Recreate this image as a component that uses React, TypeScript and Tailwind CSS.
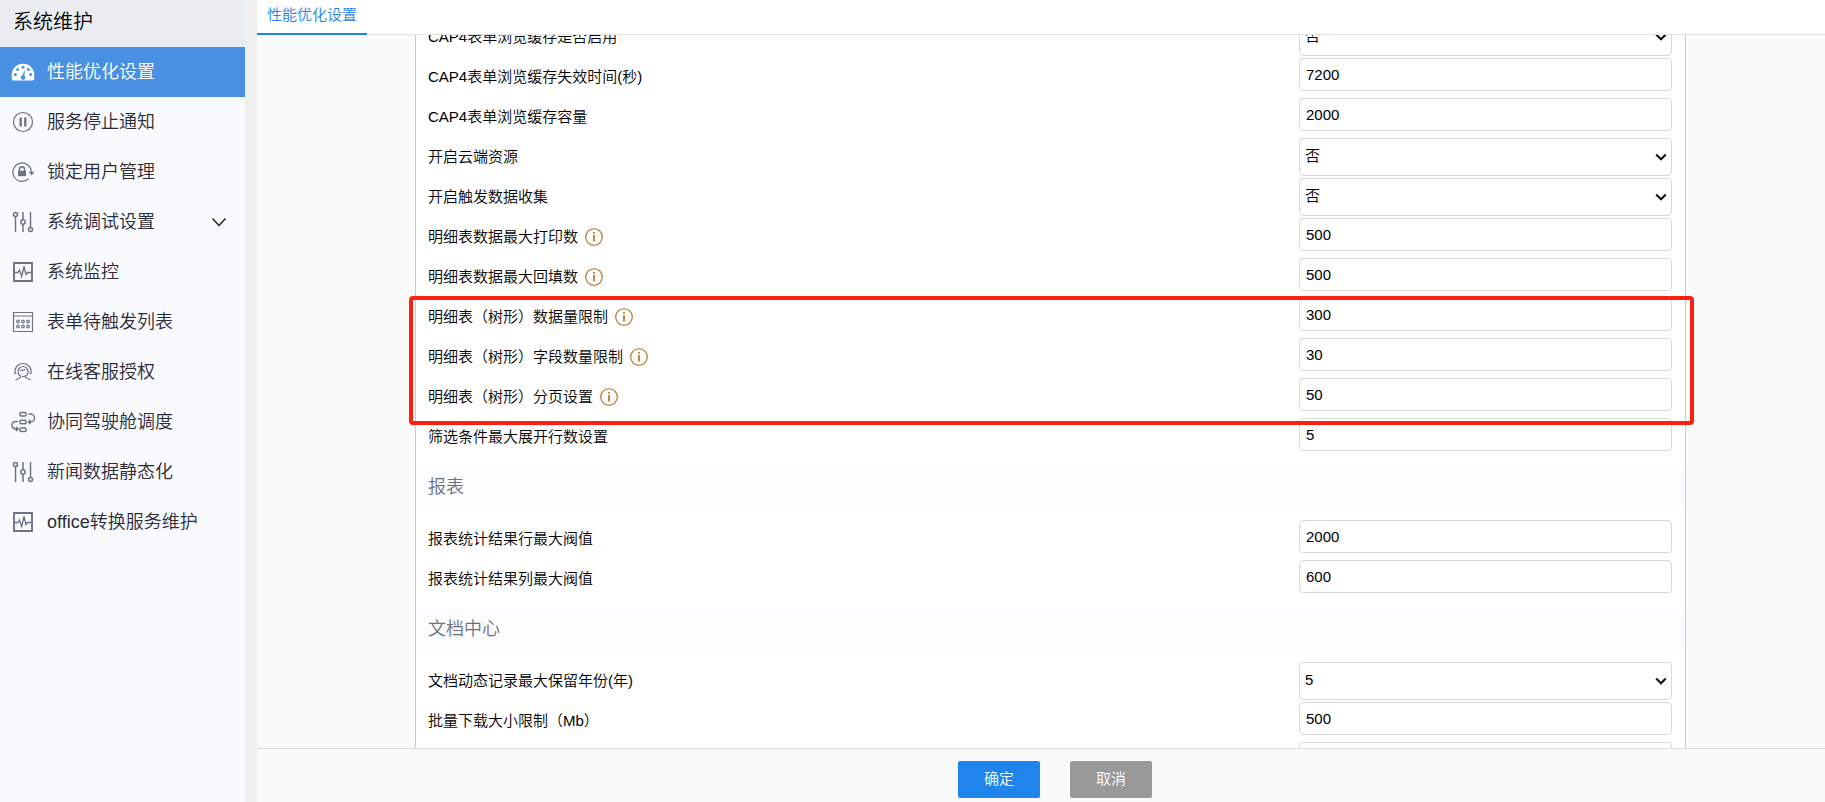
import React, { useState } from 'react';
import clsx from 'clsx';

interface MenuItem {
  name: string;
  icon: React.ReactNode;
  expandable?: boolean;
}

interface Field {
  id: string;
  label?: string;
  value: string;
  type?: 'select';
  info?: boolean;
}

const svgProps = {
  width: 24,
  height: 24,
  viewBox: '0 0 24 24',
  fill: 'none',
  stroke: 'currentColor',
  strokeWidth: 1.2,
  'aria-hidden': true,
};

const GaugeIcon = () => (
  <svg {...svgProps} stroke="none">
    <path d="M2.5 20.5A2 2 0 0 1 .7 18.500V15a11.300 11.300 0 0 1 22.600 0v3.500a2 2 0 0 1-1.800 2z" fill="#fff" />
    <g fill="#4a90e2">
      <circle cx="4.400" cy="14.500" r="1.500" />
      <circle cx="6.600" cy="9.500" r="1.500" />
      <circle cx="12" cy="7.200" r="1.500" />
      <circle cx="17.400" cy="9.500" r="1.500" />
      <circle cx="19.600" cy="14.500" r="1.500" />
      <path d="M14 9.500l-.6 6.200a2.300 2.300 0 1 1-2-.4z" />
    </g>
  </svg>
);

const PauseIcon = () => (
  <svg {...svgProps}>
    <circle cx="12" cy="12" r="9.500" />
    <path d="M9.700 7.500v9M14.300 7.500v9" strokeWidth="2.300" />
  </svg>
);

const LockIcon = () => (
  <svg {...svgProps}>
    <path d="M17.500 18.800A9.200 9.200 0 1 1 20.300 12" />
    <path d="M17.800 11.800h5.500l-2.600 3.700z" fill="currentColor" stroke="none" />
    <path d="M7 10.800h8v5.400H7z" fill="currentColor" stroke="none" />
    <path d="M8.500 11V9.300a2.500 2.500 0 0 1 5 0V11" strokeWidth="1.500" />
  </svg>
);

const SlidersIcon = () => (
  <svg {...svgProps} strokeWidth="1.500">
    <circle cx="4.500" cy="4.500" r="2" />
    <path d="M4.500 6.500V22M12 2v7.800M12 14.200V22M19.500 2v15.500" />
    <circle cx="12" cy="12" r="2.200" />
    <circle cx="19.500" cy="19.500" r="2" />
  </svg>
);

const MonitorIcon = () => (
  <svg {...svgProps}>
    <path d="M3 3h18v18H3z" strokeWidth="1.900" />
    <path d="M4 12.500h3l1.500-2.500 2.200 6.500 2.300-10 2 8 1.500-2H20" strokeWidth="1.300" />
  </svg>
);

const CalendarIcon = () => (
  <svg {...svgProps}>
    <path d="M2.500 2.500h19v19h-19zM2.500 6h19" />
    {[7, 12, 17].map((x) => (
      <React.Fragment key={x}>
        <circle cx={x} cy="11.500" r="1.300" />
        <circle cx={x} cy="16.500" r="1.300" />
      </React.Fragment>
    ))}
  </svg>
);

const ServiceIcon = () => (
  <svg {...svgProps}>
    <path d="M5.500 13.500H4V11a8 7.500 0 0 1 16 0v2.500h-1.500" />
    <path d="M7 11.500a5 5 0 0 1 10 0c0 2.500-1.500 4.500-4 5h-2" />
    <path d="M7.500 11.500c-.5 2 .5 3.700 2 4.500v1.500L4.500 20M9 10c2 .8 4 .4 5-1M14.500 16.500v1l5 2.500" />
  </svg>
);

const FlowIcon = () => (
  <svg {...svgProps} strokeWidth="1.500">
    <rect x="9" y="2.500" width="6" height="3.500" rx="1" />
    <rect x="9" y="10.200" width="6" height="3.500" rx="1" />
    <rect x="9" y="18" width="6" height="3.500" rx="1" />
    <path d="M17.500 4h2a3.500 3.500 0 0 1 0 8h-2M19.500 10l-2 2 2 2" />
    <path d="M7 11.500H4.700a3.700 3.700 0 0 0 0 7.500H7M5 17l2 2-2 2" />
  </svg>
);

const InfoIcon = () => (
  <svg width="18" height="18" viewBox="0 0 18 18" fill="none" stroke="#b86a14" aria-hidden="true">
    <circle cx="9" cy="9" r="8.300" strokeWidth="1.100" />
    <path d="M9 7v6.500" strokeWidth="1.600" />
    <path d="M9 4v1.800" strokeWidth="1.600" />
  </svg>
);

const menuItems: MenuItem[] = [
  { name: '性能优化设置', icon: <GaugeIcon /> },
  { name: '服务停止通知', icon: <PauseIcon /> },
  { name: '锁定用户管理', icon: <LockIcon /> },
  { name: '系统调试设置', icon: <SlidersIcon />, expandable: true },
  { name: '系统监控', icon: <MonitorIcon /> },
  { name: '表单待触发列表', icon: <CalendarIcon /> },
  { name: '在线客服授权', icon: <ServiceIcon /> },
  { name: '协同驾驶舱调度', icon: <FlowIcon /> },
  { name: '新闻数据静态化', icon: <SlidersIcon /> },
  { name: 'office转换服务维护', icon: <MonitorIcon /> },
];

const formFields: Field[] = [
  { id: 'cacheEnabled', label: 'CAP4表单浏览缓存是否启用', value: '否', type: 'select' },
  { id: 'cacheTimeout', label: 'CAP4表单浏览缓存失效时间(秒)', value: '7200' },
  { id: 'cacheSize', label: 'CAP4表单浏览缓存容量', value: '2000' },
  { id: 'cloud', label: '开启云端资源', value: '否', type: 'select' },
  { id: 'trigger', label: '开启触发数据收集', value: '否', type: 'select' },
  { id: 'maxPrint', label: '明细表数据最大打印数', value: '500', info: true },
  { id: 'maxFill', label: '明细表数据最大回填数', value: '500', info: true },
];

const treeFields: Field[] = [
  { id: 'treeRows', label: '明细表（树形）数据量限制', value: '300', info: true },
  { id: 'treeColumns', label: '明细表（树形）字段数量限制', value: '30', info: true },
  { id: 'treePage', label: '明细表（树形）分页设置', value: '50', info: true },
];

const filterFields: Field[] = [
  { id: 'filterRows', label: '筛选条件最大展开行数设置', value: '5' },
];

const reportFields: Field[] = [
  { id: 'reportRows', label: '报表统计结果行最大阀值', value: '2000' },
  { id: 'reportColumns', label: '报表统计结果列最大阀值', value: '600' },
];

const docFields: Field[] = [
  { id: 'docYears', label: '文档动态记录最大保留年份(年)', value: '5', type: 'select' },
  { id: 'docDownload', label: '批量下载大小限制（Mb）', value: '500' },
  { id: 'docMore', value: '' },
];

const controlClass =
  'col-start-1 row-start-1 w-full rounded border border-[#d9d9d9] bg-white text-[15px] text-black outline-none';

const FieldRow: React.FC<{ field: Field }> = ({ field }) => {
  const [value, setValue] = useState(field.value);

  return (
    <div className="flex h-10 items-start justify-between pr-[13px] pl-3">
      <div className="flex h-[38px] items-center gap-[7px]">
        {field.label && <label htmlFor={field.id}>{field.label}</label>}
        {field.info && <InfoIcon />}
      </div>
      <div className="grid w-[373px] shrink-0 items-center">
        {field.type === 'select' ? (
          <>
            <select
              id={field.id}
              value={value}
              onChange={(e) => setValue(e.target.value)}
              className={clsx(controlClass, 'h-[38px] appearance-none pr-6 pb-px pl-[5px]')}
            >
              <option>{field.value}</option>
            </select>
            <svg
              width="12"
              height="8"
              viewBox="0 0 12 8"
              fill="none"
              stroke="#111"
              strokeWidth="2.200"
              className="pointer-events-none col-start-1 row-start-1 mr-[5px] justify-self-end"
              aria-hidden="true"
            >
              <path d="M1.200 1.500L6 6.300l4.800-4.800" />
            </svg>
          </>
        ) : (
          <input
            id={field.id}
            type="text"
            value={value}
            onChange={(e) => setValue(e.target.value)}
            className={clsx(controlClass, 'h-[33px] px-1.5')}
          />
        )}
      </div>
    </div>
  );
};

const FieldList: React.FC<{ fields: Field[] }> = ({ fields }) => (
  <>
    {fields.map((field) => (
      <FieldRow key={field.id} field={field} />
    ))}
  </>
);

const SectionTitle: React.FC<{ children: React.ReactNode }> = ({ children }) => (
  <h2 className="mt-[11px] mb-[13px] flex h-[38px] items-center bg-[#fafcff] pb-0.5 pl-3 text-[18px] text-[#70707c]">
    {children}
  </h2>
);

const Sidebar = () => {
  const [active, setActive] = useState(0);

  return (
    <aside className="flex w-[245px] shrink-0 flex-col bg-[#f8fafd]">
      <h1 className="flex h-[47px] items-center bg-[#e9edf2] pb-1 pl-[13px] text-[20px] text-black">系统维护</h1>
      <nav className="flex flex-col">
        {menuItems.map((item, index) => (
          <button
            key={item.name}
            type="button"
            onClick={() => setActive(index)}
            className={clsx(
              'flex h-[50px] items-center pr-[18px] pl-[11px] text-left text-[18px]',
              active === index ? 'bg-[#4a90e2] text-white' : 'text-[#2b2b38]'
            )}
          >
            <span className={clsx('mr-3', active !== index && 'text-[#6b7385]')}>{item.icon}</span>
            <span className="flex-1">{item.name}</span>
            {item.expandable && (
              <svg width="16" height="10" viewBox="0 0 16 10" fill="none" stroke="#222" strokeWidth="1.500" aria-hidden="true">
                <path d="M1.500 1.500L8 8.500l6.500-7" />
              </svg>
            )}
          </button>
        ))}
      </nav>
    </aside>
  );
};

const App = () => {
  return (
    <div className="flex h-screen overflow-hidden bg-[#efefef] font-['Liberation_Sans','Noto_Sans_CJK_SC',sans-serif] text-[15px] font-[350] text-black">
      <Sidebar />
      <main className="ml-3 flex min-w-0 flex-1 flex-col bg-[#fafafa]">
        <div className="flex h-[35px] shrink-0 border-b border-[#e4e4e4] bg-white">
          <a href="#performance" className="-mb-px flex w-[110px] items-center justify-center border-b-2 border-[#1f85ec] pb-0.5 text-[#1f85ec]">
            性能优化设置
          </a>
        </div>

        <form className="min-h-0 flex-1 overflow-hidden pr-[139px] pl-[158px]">
          <div className="-mt-[17px] border-x border-[#ccc] bg-white">
            <FieldList fields={formFields} />
            <div className="relative">
              <FieldList fields={treeFields} />
              <div className="pointer-events-none absolute -top-0.5 -right-[9px] -bottom-[7px] -left-[7px] rounded border-4 border-[#ff1e10]" />
            </div>
            <FieldList fields={filterFields} />

            <SectionTitle>报表</SectionTitle>
            <FieldList fields={reportFields} />

            <SectionTitle>文档中心</SectionTitle>
            <FieldList fields={docFields} />
          </div>
        </form>

        <footer className="flex h-[54px] shrink-0 items-start justify-center gap-[30px] border-t border-[#dcdcdc] bg-[#fafafa] pt-3 pl-7">
          <button type="button" className="h-[37px] w-[82px] rounded-xs bg-[#1f85ec] text-white">
            确定
          </button>
          <button type="button" className="h-[37px] w-[82px] rounded-xs bg-[#999] text-white">
            取消
          </button>
        </footer>
      </main>
    </div>
  );
};

export default App;
